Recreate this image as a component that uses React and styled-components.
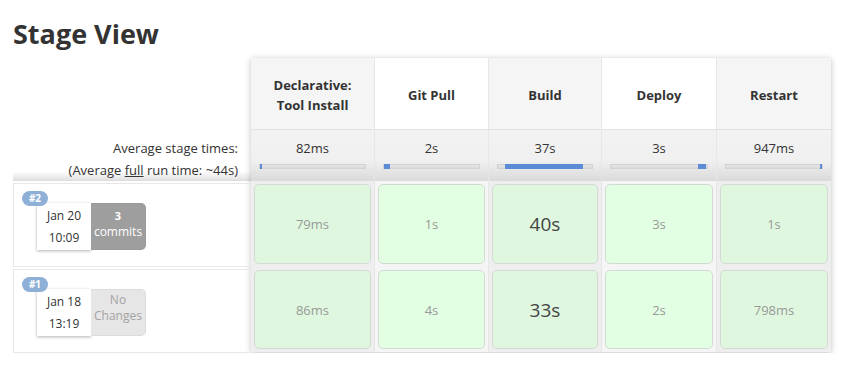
import styled, { createGlobalStyle } from "styled-components"

const GlobalStyle = createGlobalStyle`
  body {
    margin: 0;
    background: #fff;
    font-family: "Open Sans", "Liberation Sans", sans-serif;
    color: #333;
  }
`

const stages = [
  { name: ["Declarative:", "Tool Install"], width: 124, avg: "82ms", start: 0, span: 1.5 },
  { name: ["Git Pull"], width: 114, avg: "2s", start: 0, span: 6 },
  { name: ["Build"], width: 113, avg: "37s", start: 7, span: 83, long: true },
  { name: ["Deploy"], width: 115, avg: "3s", start: 91, span: 8 },
  { name: ["Restart"], width: 114, avg: "947ms", start: 98, span: 2 },
]

const runs = [
  { id: "#2", date: "Jan 20", time: "10:09", commits: 3, times: ["79ms", "1s", "40s", "3s", "1s"] },
  { id: "#1", date: "Jan 18", time: "13:19", commits: 0, times: ["86ms", "4s", "33s", "2s", "798ms"] },
]

const App = () => {
  return (
    <Page>
      <GlobalStyle />
      <Title>Stage View</Title>
      <StageGrid>
        <RunColumn>
          <HeaderSpacer />
          <AvgLabel>
            <div>Average stage times:</div>
            <div>(Average <u>full</u> run time: ~44s)</div>
          </AvgLabel>
          {runs.map((run) => (
            <RunRow key={run.id}>
              <BuildCard>
                <Badge>{run.id}</Badge>
                <DateBox>
                  <div>{run.date}</div>
                  <div>{run.time}</div>
                </DateBox>
                {run.commits > 0 ? (
                  <ChangesBox>
                    <b>{run.commits}</b>
                    <div>commits</div>
                  </ChangesBox>
                ) : (
                  <ChangesBox $empty>
                    <div>No</div>
                    <div>Changes</div>
                  </ChangesBox>
                )}
              </BuildCard>
            </RunRow>
          ))}
        </RunColumn>

        <StageTable>
          {stages.map((stage, i) => (
            <StageColumn key={stage.name.join(" ")} $width={stage.width} $shaded={i % 2 === 0}>
              <StageHeader $shaded={i % 2 === 0}>
                {stage.name.map((line) => (
                  <div key={line}>{line}</div>
                ))}
              </StageHeader>
              <AvgCell>
                <div>{stage.avg}</div>
                <Track>
                  <Fill style={{ left: stage.start + "%", width: stage.span + "%" }} />
                </Track>
              </AvgCell>
              {runs.map((run, r) => (
                <StageCell key={run.id} $first={r === 0}>
                  <CellBox $shaded={i % 2 === 0} $long={stage.long}>
                    {run.times[i]}
                  </CellBox>
                </StageCell>
              ))}
            </StageColumn>
          ))}
        </StageTable>
      </StageGrid>
    </Page>
  )
}

const Page = styled.div`
  padding: 0 0 0 13px;
`

const Title = styled.h2`
  margin: 0;
  padding-top: 17px;
  height: 41px;
  font-size: 27px;
  font-weight: 700;
  line-height: 34px;
  color: #333;
`

const StageGrid = styled.div`
  display: flex;
  align-items: flex-start;
`

const RunColumn = styled.div`
  flex: 0 0 238px;
  display: flex;
  flex-direction: column;
`

const HeaderSpacer = styled.div`
  height: 72px;
`

const AvgLabel = styled.div`
  height: 51px;
  box-sizing: border-box;
  padding: 7px 13px 0 0;
  text-align: right;
  font-size: 13px;
  line-height: 22px;
  color: #333;
  background: linear-gradient(to bottom, #fff 82%, #e2e2e2 100%);
  border-bottom: 1px solid #ddd;
`

const RunRow = styled.div`
  position: relative;
  height: 84px;
  box-sizing: border-box;
  margin-top: 2px;
  border: 1px solid #e8e8e8;
  padding: 19px 0 0 23px;
`

const BuildCard = styled.div`
  position: relative;
  display: flex;
  width: 110px;
  height: 47px;
`

const Badge = styled.div`
  position: absolute;
  left: -15px;
  top: -12px;
  z-index: 1;
  width: 26px;
  height: 15px;
  border-radius: 8px;
  background: #8eb0d6;
  color: #fff;
  font-size: 10px;
  font-weight: 700;
  line-height: 15px;
  text-align: center;
`

const DateBox = styled.div`
  width: 54px;
  box-sizing: border-box;
  padding-top: 2px;
  background: #fff;
  box-shadow: 0 1px 3px rgba(0, 0, 0, 0.3);
  text-align: center;
  font-size: 12px;
  line-height: 22px;
  color: #333;
`

const ChangesBox = styled.div`
  width: 55px;
  box-sizing: border-box;
  padding-top: ${(p) => (p.$empty ? "2px" : "4px")};
  border-radius: 0 5px 5px 0;
  background: ${(p) => (p.$empty ? "#e6e6e6" : "#9e9e9e")};
  border: 1px solid ${(p) => (p.$empty ? "#dcdcdc" : "#9a9a9a")};
  border-left: none;
  color: ${(p) => (p.$empty ? "#a3a3a3" : "#fff")};
  text-align: center;
  font-size: 12px;
  line-height: 16px;

  b {
    display: block;
    font-size: 11px;
  }
`

const StageTable = styled.div`
  display: flex;
  flex-shrink: 0;
  box-shadow: 0 1px 6px rgba(0, 0, 0, 0.25);
`

const StageColumn = styled.div`
  width: ${(p) => p.$width}px;
  box-sizing: border-box;
  display: flex;
  flex-direction: column;
  background: ${(p) => (p.$shaded ? "#eeeeee" : "#f5f5f5")};
  border-right: 1px solid #e6e6e6;

  &:last-child {
    border-right: none;
  }
`

const StageHeader = styled.div`
  height: 72px;
  display: flex;
  flex-direction: column;
  justify-content: center;
  align-items: center;
  background: ${(p) => (p.$shaded ? "#f5f5f5" : "#fff")};
  border-bottom: 1px solid #e2e2e2;
  font-size: 13px;
  font-weight: 700;
  line-height: 20px;
  color: #333;
  box-sizing: border-box;
  padding-top: 3px;
`

const AvgCell = styled.div`
  height: 51px;
  box-sizing: border-box;
  padding: 7px 8px 0;
  text-align: center;
  font-size: 13px;
  line-height: 22px;
  color: #333;
  background: linear-gradient(to bottom, #f2f2f2 0%, #f0f0f0 60%, #dadada 100%);
`

const Track = styled.div`
  position: relative;
  height: 5px;
  margin-top: 5px;
  background: linear-gradient(to bottom, #e6e6e6, #dadada);
  border: 1px solid #d2d2d2;
  box-sizing: border-box;
`

const Fill = styled.div`
  position: absolute;
  top: -1px;
  bottom: -1px;
  min-width: 2px;
  background: #5b8bd4;
`

const StageCell = styled.div`
  height: ${(p) => (p.$first ? "86px" : "85px")};
  box-sizing: border-box;
  padding: 3px;
`

const CellBox = styled.div`
  height: 100%;
  box-sizing: border-box;
  display: flex;
  align-items: center;
  justify-content: center;
  border: 1px solid #d3dad3;
  border-radius: 5px;
  background: ${(p) => (p.$shaded ? "#dff7df" : "#e3ffe3")};
  color: ${(p) => (p.$long ? "#444" : "#999")};
  font-size: ${(p) => (p.$long ? "19px" : "13px")};
`

export default App
